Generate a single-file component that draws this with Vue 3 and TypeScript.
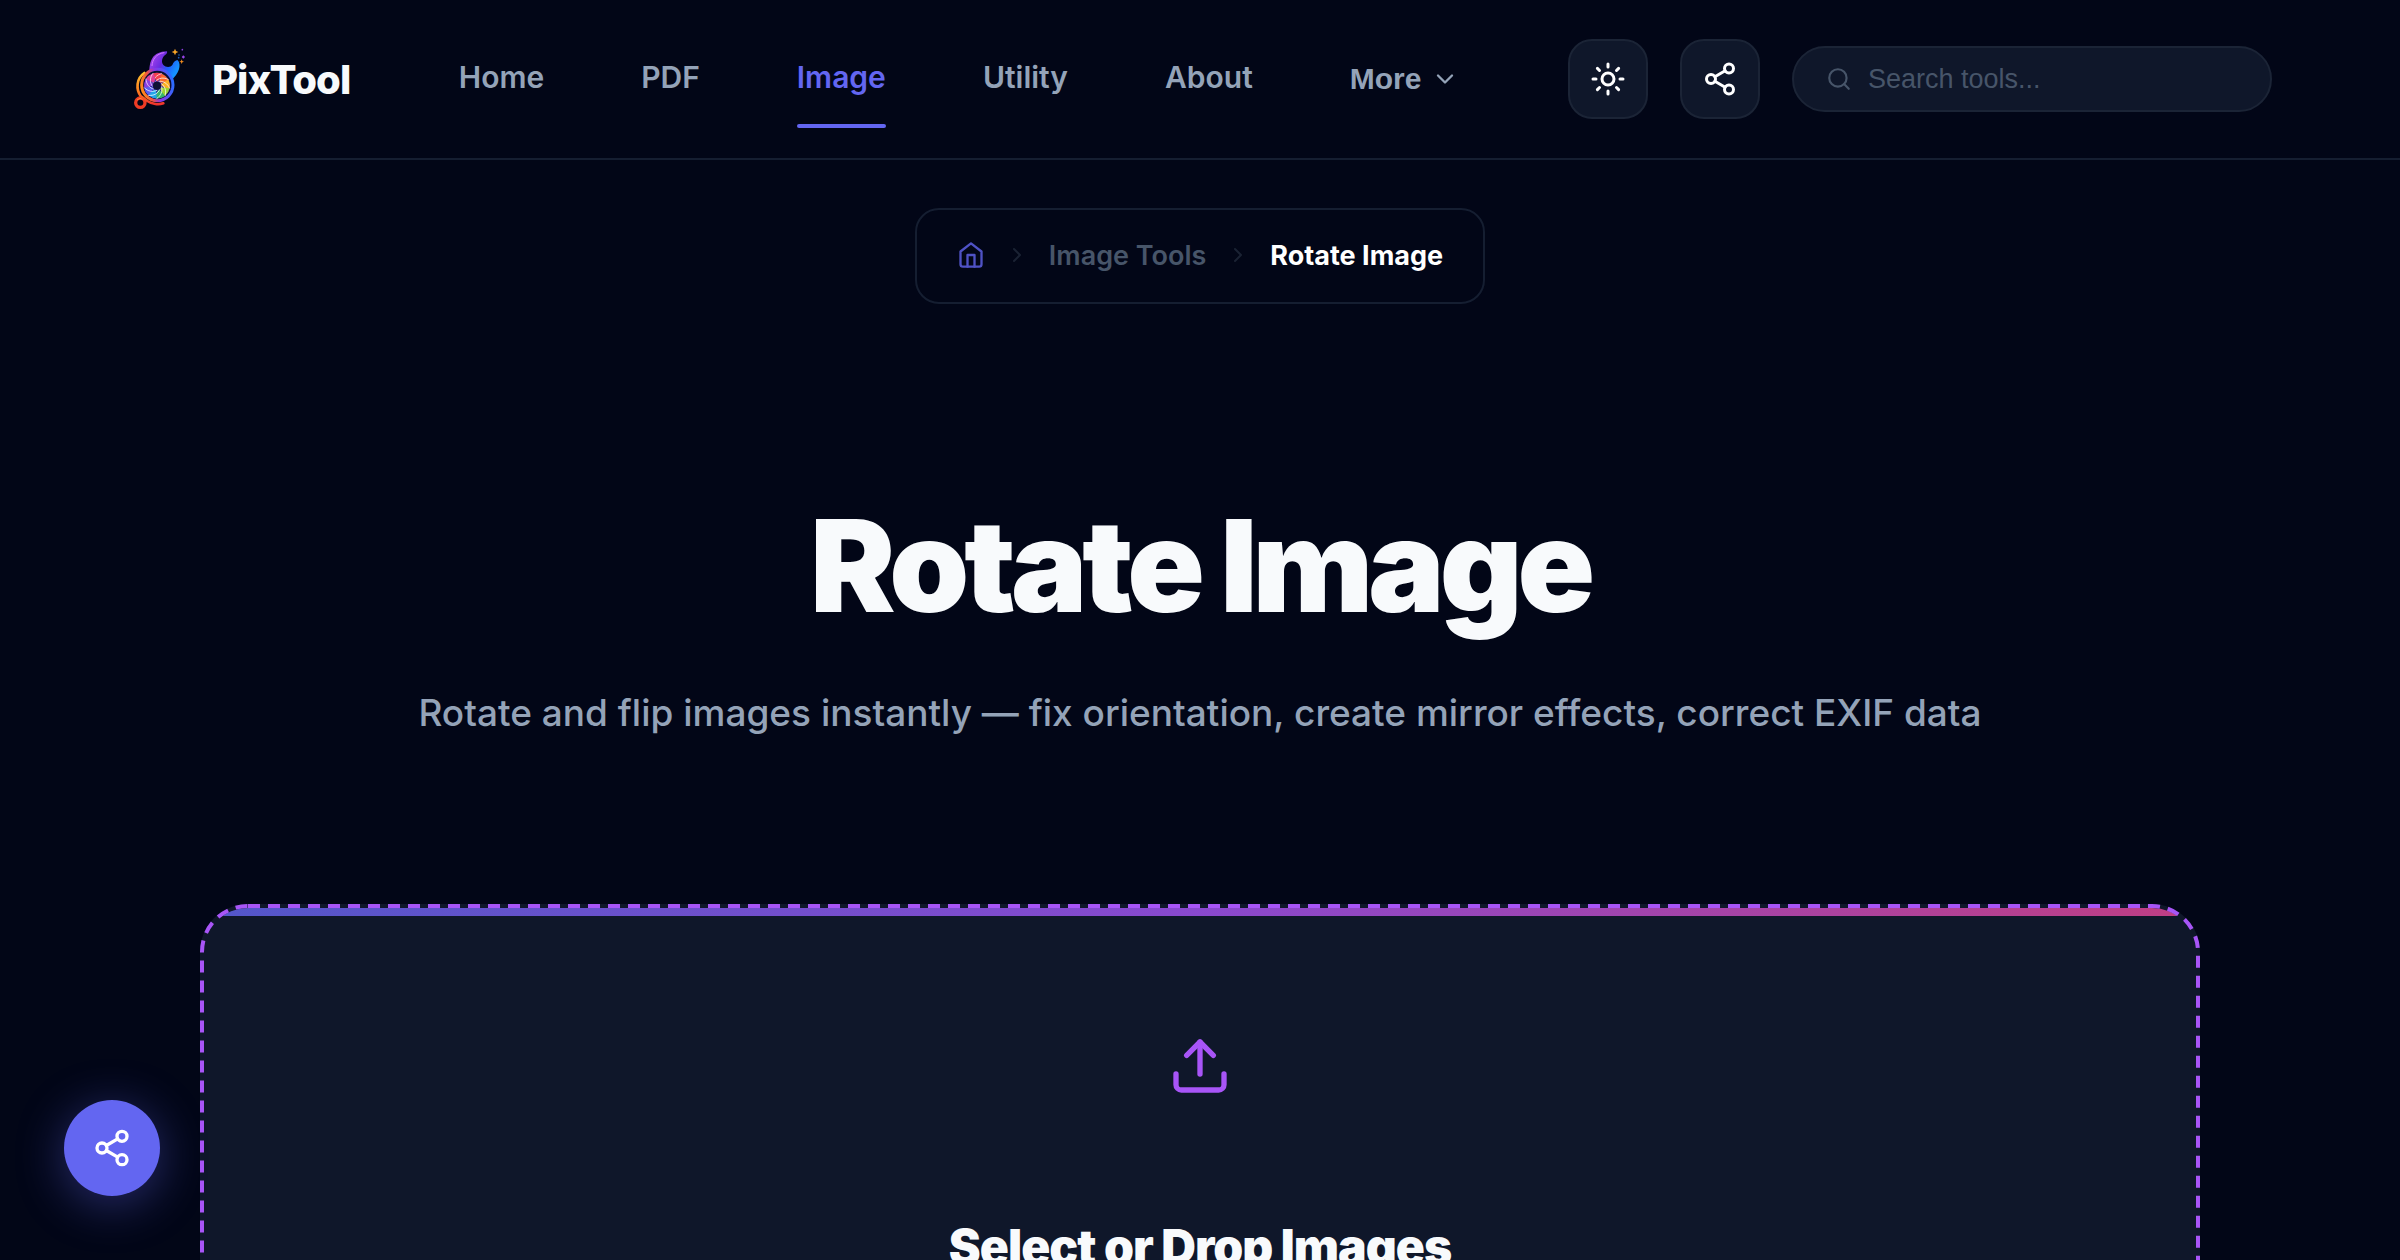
<script setup lang="ts">
interface NavLink {
  label: string
  active?: boolean
}

const links: NavLink[] = [
  { label: 'Home' },
  { label: 'PDF' },
  { label: 'Image', active: true },
  { label: 'Utility' },
  { label: 'About' },
]

const bladeColors = ['#f43f4e', '#fb6a2c', '#fbb024', '#9bd32f', '#35b56a', '#22a7e8', '#5b5ff0', '#8b3fe0', '#e0409a']

const blades = bladeColors.map((color, i) => ({ color, turn: `rotate(${i * 40} 141 170)` }))
</script>

<template>
  <div class="page">
    <header class="header">
      <a class="brand" href="#">
        <svg class="brand-mark" viewBox="54 54 192 192" aria-hidden="true">
          <defs>
            <linearGradient id="ring" x1="0" y1="0.6" x2="1" y2="0.4">
              <stop offset="0" stop-color="#ff8a1e" />
              <stop offset="0.25" stop-color="#f0553c" />
              <stop offset="0.5" stop-color="#8a35e8" />
              <stop offset="1" stop-color="#2b6cff" />
            </linearGradient>
            <linearGradient id="jaw" x1="0" y1="0" x2="1" y2="0.5">
              <stop offset="0" stop-color="#b94df0" />
              <stop offset="0.5" stop-color="#6a2be0" />
              <stop offset="0.75" stop-color="#1f63ff" />
              <stop offset="1" stop-color="#1592ff" />
            </linearGradient>
            <linearGradient id="band" x1="0" y1="0" x2="0" y2="1">
              <stop offset="0" stop-color="#ffc02e" />
              <stop offset="0.6" stop-color="#ff7a1e" />
              <stop offset="1" stop-color="#f0342c" />
            </linearGradient>
          </defs>
          <path d="M118 126C119 98 126 68 171 67C172 70 171 73 169 75C155 84 153 99 160 108C167 116 182 116 187 108C190 101 194 95 202 93C211 99 214 124 190 148L160 140Z" fill="url(#jaw)" />
          <path d="M126 110C127 92 138 74 162 71" fill="none" stroke="#d27bff" stroke-width="3" stroke-linecap="round" />
          <circle cx="91" cy="221" r="14" fill="none" stroke="#ef3b24" stroke-width="10" />
          <path d="M82 212A13 13 0 0 1 98 210" fill="none" stroke="#ff8a3c" stroke-width="3" />
          <path d="M103 132C78 148 78 182 92 201L112 216C126 226 146 228 160 223" fill="none" stroke="url(#band)" stroke-width="8" stroke-linecap="round" />
          <circle cx="142" cy="168" r="47" fill="#0b1030" stroke="url(#ring)" stroke-width="9" />
          <circle cx="141" cy="170" r="39" fill="#32219c" />
          <g v-for="blade in blades" :key="blade.color" :transform="blade.turn">
            <path d="M141 158C152 150 158 138 155 134A39 39 0 0 0 129 133C132 144 136 152 141 158Z" :fill="blade.color" />
            <path d="M129 162C130 150 139 137 155 134" fill="none" stroke="#fff" stroke-width="2" />
          </g>
          <circle cx="141" cy="170" r="12" fill="#101234" />
          <path d="M195 59L198 66L205 69L198 72L195 79L192 72L185 69L192 66Z" fill="#f7a326" />
          <path d="M215 91L217 96L222 98L217 100L215 105L213 100L208 98L213 96Z" fill="#f08a1e" />
          <circle cx="217" cy="62" r="2.5" fill="#8a3fe0" />
          <path d="M220 79L225 84L220 89L215 84Z" fill="#9a45e8" />
          <circle cx="207" cy="78" r="2" fill="#2a7be0" />
          <circle cx="206" cy="86" r="2.5" fill="#1a5ac0" />
        </svg>
        <span>PixTool</span>
      </a>

      <nav class="nav" aria-label="Main">
        <a v-for="link in links" :key="link.label" href="#" class="nav-link" :class="{ active: link.active }">{{ link.label }}</a>
        <button type="button" class="more">
          More
          <svg class="icon-28" viewBox="0 0 24 24" aria-hidden="true"><path d="m6 9 6 6 6-6" /></svg>
        </button>
      </nav>

      <div class="actions">
        <button type="button" class="square" aria-label="Toggle theme">
          <svg class="icon-36" viewBox="0 0 24 24">
            <circle cx="12" cy="12" r="4" />
            <path d="M12 2v2M12 20v2M4.93 4.93l1.41 1.41M17.66 17.66l1.41 1.41M2 12h2M20 12h2M6.34 17.66l-1.41 1.41M19.07 4.93l-1.41 1.41" />
          </svg>
        </button>
        <button type="button" class="square" aria-label="Share">
          <svg class="icon-36" viewBox="0 0 24 24">
            <circle cx="18" cy="5" r="3" /><circle cx="6" cy="12" r="3" /><circle cx="18" cy="19" r="3" />
            <path d="m8.59 13.51 6.83 3.98M15.41 6.51l-6.82 3.98" />
          </svg>
        </button>
        <label class="search">
          <svg class="icon-26" viewBox="0 0 24 24" aria-hidden="true"><circle cx="11" cy="11" r="8" /><path d="m21 21-4.3-4.3" /></svg>
          <input type="search" placeholder="Search tools..." aria-label="Search tools" />
        </label>
      </div>
    </header>

    <main class="main">
      <nav class="crumbs" aria-label="Breadcrumb">
        <a href="#" class="crumb-home" aria-label="Home">
          <svg class="icon-28" viewBox="0 0 24 24">
            <path d="m3 9 9-7 9 7v11a2 2 0 0 1-2 2H5a2 2 0 0 1-2-2z" /><path d="M9 22V12h6v10" />
          </svg>
        </a>
        <svg class="crumb-sep" viewBox="0 0 24 24" aria-hidden="true"><path d="m9 18 6-6-6-6" /></svg>
        <a href="#" class="crumb-link">Image Tools</a>
        <svg class="crumb-sep" viewBox="0 0 24 24" aria-hidden="true"><path d="m9 18 6-6-6-6" /></svg>
        <span class="crumb-current" aria-current="page">Rotate Image</span>
      </nav>

      <h1>Rotate Image</h1>
      <p class="lead">Rotate and flip images instantly — fix orientation, create mirror effects, correct EXIF data</p>

      <section class="uploader">
        <div class="dropzone">
          <svg class="upload" viewBox="0 0 24 24" aria-hidden="true">
            <path d="M21 15v4a2 2 0 0 1-2 2H5a2 2 0 0 1-2-2v-4" /><path d="m17 8-5-5-5 5" /><path d="M12 3v12" />
          </svg>
          <h2>Select or Drop Images</h2>
        </div>
        <svg class="dashes" aria-hidden="true"><rect x="2" y="2" rx="46" /></svg>
      </section>
    </main>

    <button type="button" class="fab" aria-label="Share this page">
      <svg class="icon-40" viewBox="0 0 24 24">
        <circle cx="18" cy="5" r="3" /><circle cx="6" cy="12" r="3" /><circle cx="18" cy="19" r="3" />
        <path d="m8.59 13.51 6.83 3.98M15.41 6.51l-6.82 3.98" />
      </svg>
    </button>
  </div>
</template>

<style>
body {
  background: #020617;
}
</style>

<style scoped>
.page {
  height: 100vh;
  overflow: hidden;
  background: #020617;
  color: #f8fafc;
  font-family: Inter, sans-serif;
}

.page * {
  box-sizing: border-box;
}

a {
  color: inherit;
  text-decoration: none;
}

button {
  padding: 0;
  border: 0;
  background: none;
  font: inherit;
  cursor: pointer;
}

svg {
  display: block;
  flex: none;
  fill: none;
  stroke: currentColor;
  stroke-width: 2;
  stroke-linecap: round;
  stroke-linejoin: round;
}

.icon-26 {
  width: 26px;
  height: 26px;
}

.icon-28 {
  width: 28px;
  height: 28px;
}

.icon-36 {
  width: 36px;
  height: 36px;
}

.icon-40 {
  width: 40px;
  height: 40px;
}

.header {
  display: flex;
  align-items: center;
  justify-content: space-between;
  height: 160px;
  padding: 0 128px;
  border-bottom: 2px solid #151e31;
}

.brand {
  display: flex;
  align-items: center;
  gap: 20px;
  font-size: 40px;
  font-weight: 800;
  letter-spacing: -1px;
}

.brand-mark {
  width: 64px;
  height: 64px;
  stroke: none;
}

.nav {
  display: flex;
  align-items: center;
  gap: 97px;
  color: #94a3b8;
  font-size: 30px;
  font-weight: 600;
}

.nav-link {
  position: relative;
  padding: 29px 0 33px;
  line-height: 36px;
}

.nav-link.active {
  color: #6366f1;
}

.nav-link.active::after {
  content: "";
  position: absolute;
  right: 0;
  bottom: 0;
  left: 0;
  height: 4px;
  border-radius: 2px;
  background: #6366f1;
}

.more {
  display: flex;
  align-items: center;
  gap: 10px;
  color: #94a3b8;
  font: 600 30px "Liberation Sans", sans-serif;
}

.actions {
  display: flex;
  align-items: center;
  gap: 32px;
}

.square {
  display: grid;
  place-items: center;
  width: 80px;
  height: 80px;
  border: 2px solid #1b2436;
  border-radius: 24px;
  background: #0f172a;
  color: #fff;
}

.search {
  display: flex;
  align-items: center;
  gap: 16px;
  width: 480px;
  height: 66px;
  padding: 0 32px;
  border: 2px solid #1b2436;
  border-radius: 33px;
  background: #0f172a;
  color: #475569;
}

.search input {
  flex: 1;
  min-width: 0;
  padding: 0;
  border: 0;
  outline: 0;
  background: none;
  color: #f8fafc;
  font: 27px "Liberation Sans", sans-serif;
}

.search input::placeholder {
  color: #475569;
  opacity: 1;
}

.main {
  display: flex;
  flex-direction: column;
  align-items: center;
  padding: 48px 128px 0;
}

.crumbs {
  display: flex;
  align-items: center;
  gap: 20px;
  height: 96px;
  padding: 0 40px 2px;
  border: 2px solid #151e31;
  border-radius: 24px;
  font-size: 27px;
}

.crumb-home {
  color: #6366f1;
  opacity: 0.8;
}

.crumb-sep {
  width: 24px;
  height: 24px;
  color: #1a2233;
}

.crumb-link {
  color: #475569;
  font-weight: 600;
}

.crumb-current {
  color: #fff;
  font-weight: 700;
}

h1 {
  margin: 192px 0 0;
  font-size: 128px;
  font-weight: 900;
  line-height: 140px;
  letter-spacing: -5px;
}

.lead {
  margin: 48px 0 0;
  color: #94a3b8;
  font-size: 37px;
  font-weight: 500;
  line-height: 58px;
}

.uploader {
  position: relative;
  width: 100%;
  max-width: 2000px;
  margin-top: 162px;
}

.dropzone {
  position: relative;
  display: flex;
  flex-direction: column;
  align-items: center;
  padding: 126px 96px 128px;
  overflow: hidden;
  border: 4px solid transparent;
  border-radius: 48px;
  background: #0f172a border-box;
}

.dropzone::before {
  content: "";
  position: absolute;
  top: 0;
  right: 0;
  left: 0;
  height: 8px;
  background: linear-gradient(90deg, #6366f1, #a855f7, #ec4899);
  opacity: 0.8;
}

.dashes {
  position: absolute;
  inset: 0;
  width: 100%;
  height: 100%;
  pointer-events: none;
}

.dashes rect {
  width: calc(100% - 4px);
  height: calc(100% - 4px);
  stroke: #a855f7;
  stroke-width: 4;
  stroke-dasharray: 12 8;
  stroke-linecap: butt;
}

.upload {
  width: 64px;
  height: 64px;
  color: #a855f7;
}

h2 {
  margin: 120px 0 0;
  font-size: 48px;
  font-weight: 900;
  line-height: 58px;
  letter-spacing: -1px;
}

.fab {
  position: fixed;
  bottom: 64px;
  left: 64px;
  display: grid;
  place-items: center;
  width: 96px;
  height: 96px;
  border-radius: 50%;
  background: #6366f1;
  box-shadow: 0 8px 48px rgb(99 102 241 / 40%);
  color: #fff;
}
</style>
